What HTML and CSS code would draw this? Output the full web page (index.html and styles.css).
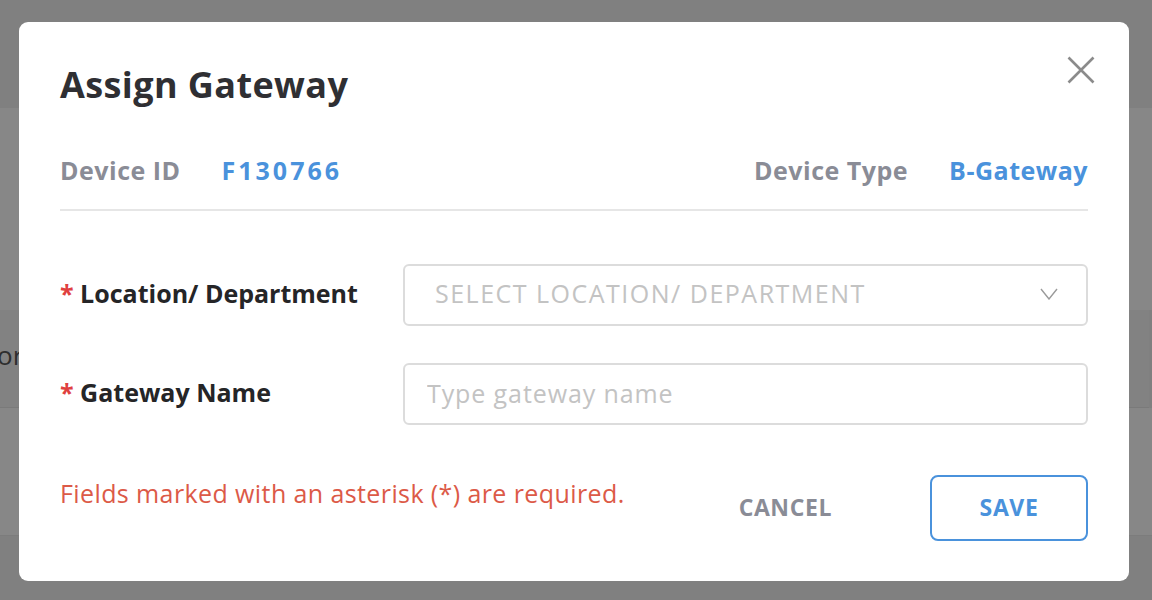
FILE: index.html
```html
<!DOCTYPE html>
<html lang="en">
<head>
<meta charset="utf-8">
<title>Assign Gateway</title>
<link rel="stylesheet" href="styles.css">
</head>
<body>
<div class="page">
  <div class="band band-top"></div>
  <div class="band band-a"></div>
  <div class="band band-row"><span class="row-text">or</span></div>
  <div class="band band-b"></div>
  <div class="band band-bottom"></div>
</div>
<div class="overlay">
  <div class="modal">
    <div class="modal-head">
      <h1 class="title">Assign Gateway</h1>
      <button class="close" aria-label="Close">
        <svg width="28" height="28" viewBox="0 0 28 28"><path d="M1.5 1.5 L26.5 26.5 M26.5 1.5 L1.5 26.5" stroke="#8b8b8b" stroke-width="2.6" fill="none"/></svg>
      </button>
    </div>
    <div class="info">
      <div class="info-item"><span class="info-label">Device ID</span><span class="info-value info-id">F130766</span></div>
      <div class="info-item"><span class="info-label">Device Type</span><span class="info-value">B-Gateway</span></div>
    </div>
    <div class="form">
      <div class="field">
        <label class="field-label"><span class="req">*</span> Location/ Department</label>
        <div class="select">
          <span class="select-text">SELECT LOCATION/ DEPARTMENT</span>
          <svg class="chev" width="18" height="12" viewBox="0 0 18 12"><path d="M1 1 L9 11 L17 1" stroke="#9a9a9a" stroke-width="1.4" fill="none"/></svg>
        </div>
      </div>
      <div class="field">
        <label class="field-label"><span class="req">*</span> Gateway Name</label>
        <input class="input" type="text" placeholder="Type gateway name">
      </div>
    </div>
    <div class="footer">
      <p class="error">Fields marked with an asterisk (*) are required.</p>
      <div class="actions">
        <button class="btn-cancel">CANCEL</button>
        <button class="btn-save">SAVE</button>
      </div>
    </div>
  </div>
</div>
</body>
</html>
```
FILE: styles.css
```css
* { box-sizing: border-box; }
html, body { margin: 0; padding: 0; }
body {
  width: 1152px;
  height: 600px;
  overflow: hidden;
  font-family: "Open Sans", "Liberation Sans", sans-serif;
  background: #808080;
}
.page {
  display: flex;
  flex-direction: column;
  height: 600px;
}
.band { width: 100%; }
.band-top { height: 108px; background: #808080; }
.band-a { height: 202px; background: #878787; }
.band-row {
  height: 98px;
  background: #828282;
  border-bottom: 1px solid #7a7a7a;
  display: flex;
  align-items: center;
  padding-bottom: 8px;
  margin-left: -3px;
}
.row-text { font-size: 26px; color: #2e2e2e; }
.band-b { height: 127px; background: #878787; }
.band-bottom { flex: 1; background: #808080; border-top: 1px solid #7c7c7c; }

.overlay {
  position: fixed;
  inset: 0;
}
.modal {
  position: absolute;
  left: 19px;
  top: 22px;
  width: 1110px;
  height: 559px;
  background: #fff;
  border-radius: 9px;
  padding: 0 41px;
}
.modal-head {
  display: flex;
  justify-content: space-between;
  align-items: flex-start;
  height: 118px;
}
.title {
  margin: 41px 0 0;
  font-size: 36px;
  font-weight: 700;
  color: #2f2f33;
  line-height: 44px;
  letter-spacing: 0.4px;
}
.close {
  margin: 34px -7px 0 0;
  padding: 0;
  border: 0;
  background: none;
  width: 28px;
  height: 28px;
  display: flex;
}
.info {
  display: flex;
  justify-content: space-between;
  height: 71px;
  border-bottom: 2px solid #e6e6e6;
  padding-top: 12px;
}
.info-item {
  display: flex;
  gap: 41px;
  font-size: 25px;
  font-weight: 700;
  line-height: 36px;
  height: 36px;
  letter-spacing: 0.5px;
}
.info-label { color: #8a8c96; }
.info-value { color: #4a92dc; }
.info-id { letter-spacing: 3px; margin-right: -3px; }
.form {
  display: flex;
  flex-direction: column;
  gap: 37px;
  padding-top: 53px;
}
.field { display: flex; align-items: center; }
.field-label {
  width: 343px;
  font-size: 25px;
  font-weight: 700;
  color: #252527;
  padding-bottom: 4px;
}
.req { color: #e0403f; }
.select, .input {
  flex: 1;
  height: 62px;
  border: 2px solid #dcdcdc;
  border-radius: 6px;
  background: #fff;
}
.select {
  display: flex;
  align-items: center;
  justify-content: space-between;
  padding: 0 28px 0 30px;
}
.select-text {
  font-size: 25px;
  color: #c3c3c3;
  letter-spacing: 1.5px;
  padding-bottom: 4px;
}
.chev { margin-bottom: 2px; }
.input {
  padding: 0 22px 3px;
  font-family: inherit;
  font-size: 25px;
  letter-spacing: 0.9px;
  color: #333;
  outline: none;
}
.input::placeholder { color: #c3c3c3; }
.footer {
  display: flex;
  justify-content: space-between;
  align-items: flex-start;
  padding-top: 50px;
}
.error {
  margin: 2px 0 0;
  font-size: 25px;
  letter-spacing: 0.4px;
  color: #dc5a47;
  line-height: 32px;
}
.actions { display: flex; align-items: center; gap: 98px; }
.btn-cancel {
  border: 0;
  background: none;
  padding: 0 0 2px;
  font-family: inherit;
  font-size: 23px;
  letter-spacing: 0.6px;
  font-weight: 700;
  color: #8a8c96;
}
.btn-save {
  width: 158px;
  height: 66px;
  border: 2px solid #4a92dc;
  border-radius: 8px;
  background: #fff;
  font-family: inherit;
  font-size: 23px;
  letter-spacing: 0.6px;
  font-weight: 700;
  color: #4a92dc;
  padding: 0 0 2px;
}
```
